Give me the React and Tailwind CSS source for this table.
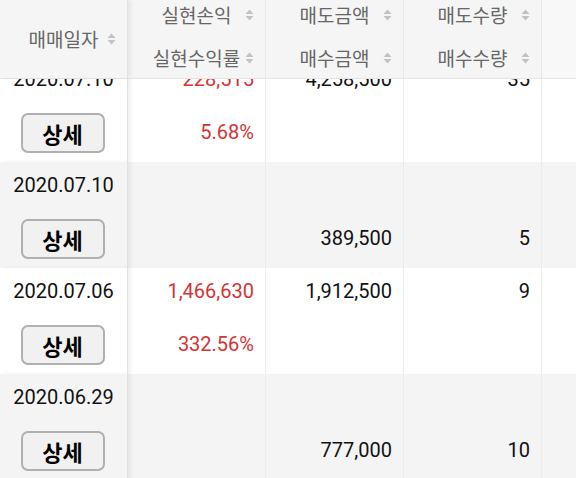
import React from "react";

const font = { fontFamily: "Roboto, 'Noto Sans CJK KR', sans-serif" };
const kr = { fontFamily: "'Noto Sans CJK KR', sans-serif" };

const rows = [
  { date: "2020.07.10", pnl: "228,515", rate: "5.68%", sell: "4,258,500", buy: "", sellQty: "35", buyQty: "" },
  { date: "2020.07.10", pnl: "", rate: "", sell: "", buy: "389,500", sellQty: "", buyQty: "5" },
  { date: "2020.07.06", pnl: "1,466,630", rate: "332.56%", sell: "1,912,500", buy: "", sellQty: "9", buyQty: "" },
  { date: "2020.06.29", pnl: "", rate: "", sell: "", buy: "777,000", sellQty: "", buyQty: "10" },
];

// 정렬 아이콘
const SortIcon = () => (
  <svg width="9" height="12" viewBox="0 0 9 12" className="shrink-0">
    <path d="M4.5 0.5 L8.5 5 L0.5 5 Z" fill="#c2c2c2" />
    <path d="M4.5 11.5 L8.5 7 L0.5 7 Z" fill="#c2c2c2" />
  </svg>
);

// 텍스트는 셀 가운데, 아이콘은 오른쪽 끝
const HeadLabel = ({ children }) => (
  <div className="grid grid-cols-[1fr_auto_1fr] items-center h-6">
    <span />
    <span className="text-[19px] leading-6 text-[#666] whitespace-nowrap" style={kr}>
      {children}
    </span>
    <span className="flex justify-end pr-[11px]">
      <SortIcon />
    </span>
  </div>
);

const HeadCell = ({ top, bottom }) => (
  <div className="w-[138px] shrink-0 h-full flex flex-col pt-[3px] gap-[19px] border-r border-[#e9e9e9]">
    <HeadLabel>{top}</HeadLabel>
    <HeadLabel>{bottom}</HeadLabel>
  </div>
);

const BodyCell = ({ top, bottom, red }) => (
  <div className={`w-[138px] shrink-0 h-full border-r border-[#ececec] flex flex-col pt-[9px] gap-[25px] pr-[11px] text-right ${red ? "text-[#d33434]" : "text-[#111]"}`}>
    <div className="h-7 leading-7">{top}</div>
    <div className="h-7 leading-7">{bottom}</div>
  </div>
);

export default function App() {
  return (
    <div className="w-[576px] h-[478px] overflow-hidden bg-white" style={font}>
      {/* 헤더 */}
      <div className="relative z-20 h-[79px] flex bg-[#f5f5f5] border-b border-[#e6e6e6]">
        <div className="relative z-10 w-[128px] shrink-0 h-full flex flex-col justify-center border-r border-[#e2e2e2] shadow-[3px_0_4px_rgba(0,0,0,0.06)]">
          <HeadLabel>매매일자</HeadLabel>
        </div>
        <HeadCell top="실현손익" bottom="실현수익률" />
        <HeadCell top="매도금액" bottom="매수금액" />
        <HeadCell top="매도수량" bottom="매수수량" />
        <div className="flex-1 h-full bg-[#f8f8f8]" />
      </div>

      {/* 목록 */}
      <div className="-mt-[23px] text-[20px]">
        {rows.map((r, i) => (
          <div key={i} className={`h-[106px] flex ${i % 2 ? "bg-[#f4f4f4]" : "bg-white"}`}>
            <div className={`relative z-10 w-[128px] shrink-0 h-full flex flex-col items-center pt-[9px] gap-[20px] border-r border-[#e2e2e2] shadow-[3px_0_4px_rgba(0,0,0,0.06)] ${i % 2 ? "bg-[#f4f4f4]" : "bg-white"}`}>
              <div className="h-7 leading-7 text-[#111]">{r.date}</div>
              <button
                style={kr}
                className="w-[84px] h-[40px] ml-[-2px] rounded-[7px] border-2 border-[#b0b0b0] bg-[#f1f1f1] text-[22px] font-bold text-black leading-none"
              >
                상세
              </button>
            </div>
            <BodyCell top={r.pnl} bottom={r.rate} red />
            <BodyCell top={r.sell} bottom={r.buy} />
            <BodyCell top={r.sellQty} bottom={r.buyQty} />
            <div className="flex-1 h-full" />
          </div>
        ))}
      </div>
    </div>
  );
}
